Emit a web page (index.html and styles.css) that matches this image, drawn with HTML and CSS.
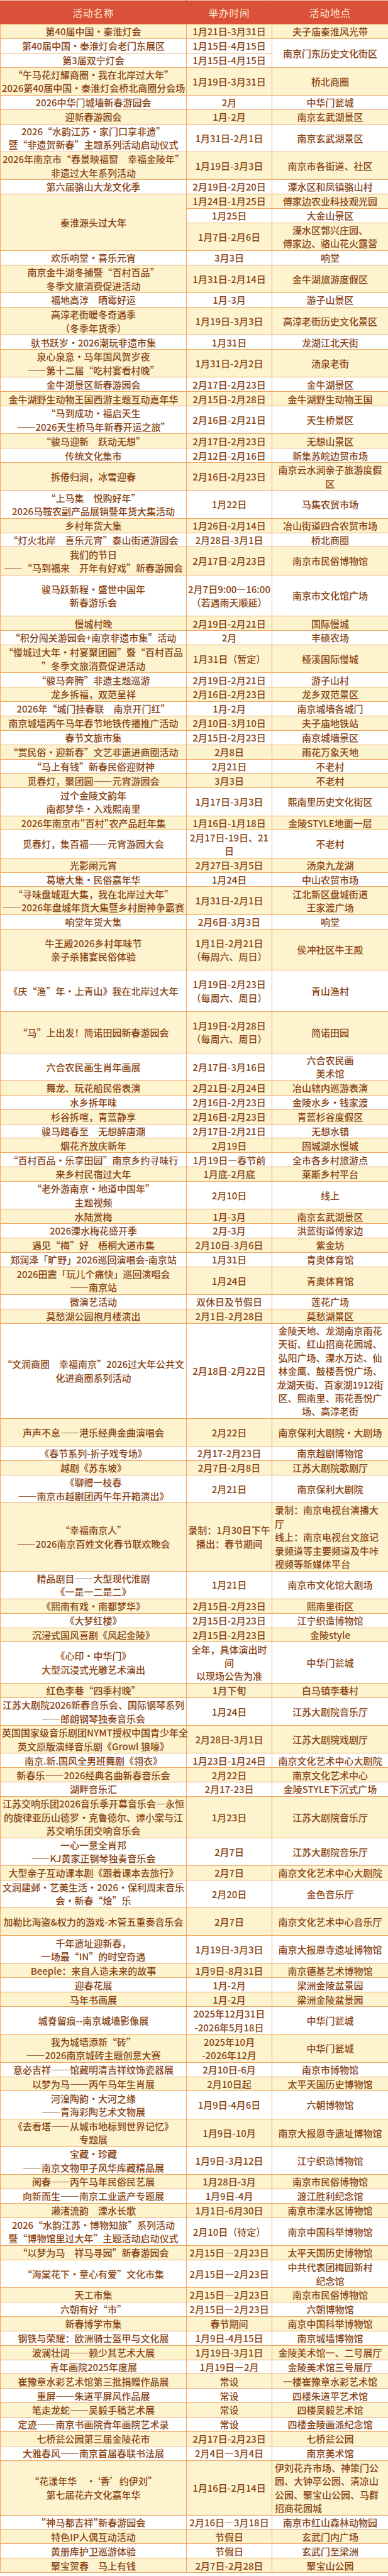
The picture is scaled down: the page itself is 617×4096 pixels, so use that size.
FILE: index.html
```html
<!DOCTYPE html>
<html lang="zh-CN">
<head>
<meta charset="utf-8">
<title>2026南京新春文旅活动</title>
<link rel="stylesheet" href="styles.css">
</head>
<body>
<table class="events">
<colgroup><col class="c-name"><col class="c-time"><col class="c-place"></colgroup>
<thead>
<tr><th>活动名称</th><th>举办时间</th><th>活动地点</th></tr>
</thead>
<tbody>
<tr class="y"><td>第40届中国·秦淮灯会</td><td>1月21日-3月31日</td><td>夫子庙秦淮风光带</td></tr>
<tr><td>第40届中国·秦淮灯会老门东展区</td><td>1月15日-4月15日</td><td rowspan="2">南京门东历史文化街区</td></tr>
<tr><td>第3届双宁灯会</td><td>1月15日-4月15日</td></tr>
<tr class="y"><td>“午马花灯耀商圈·我在北岸过大年”<br>2026第40届中国·秦淮灯会桥北商圈分会场</td><td>1月19日-3月31日</td><td>桥北商圈</td></tr>
<tr><td>2026中华门城墙新春游园会</td><td>2月</td><td>中华门瓮城</td></tr>
<tr class="y"><td>迎新春游园会</td><td>1月-2月</td><td>南京玄武湖景区</td></tr>
<tr><td>2026“水韵江苏·家门口享非遗”<br>暨“非遗贺新春”主题系列活动启动仪式</td><td>1月31日-2月1日</td><td>南京玄武湖景区</td></tr>
<tr class="y"><td>2026年南京市“春景映福窗　幸福金陵年”<br>非遗过大年系列活动</td><td>1月19日-3月3日</td><td>南京市各街道、社区</td></tr>
<tr><td>第六届骆山大龙文化季</td><td>2月19日-2月20日</td><td>溧水区和凤镇骆山村</td></tr>
<tr class="y"><td rowspan="3">秦淮源头过大年</td><td>1月24日-1月25日</td><td>傅家边农业科技观光园</td></tr>
<tr><td>1月25日</td><td>大金山景区</td></tr>
<tr class="y"><td>1月7日-2月6日</td><td>溧水区郭兴庄园、<br>傅家边、骆山花火露营</td></tr>
<tr><td>欢乐响堂·喜乐元宵</td><td>3月3日</td><td>响堂</td></tr>
<tr class="y"><td>南京金牛湖冬捕暨“百村百品”<br>冬季文旅消费促进活动</td><td>1月31日-2月14日</td><td>金牛湖旅游度假区</td></tr>
<tr><td>福地高淳　晒霉好运</td><td>1月-3月</td><td>游子山景区</td></tr>
<tr class="y"><td>高淳老街暖冬奇遇季<br>（冬季年货季）</td><td>1月19日-3月3日</td><td>高淳老街历史文化景区</td></tr>
<tr><td>驮书跃岁·2026潮玩非遗市集</td><td>1月31日</td><td>龙湖江北天街</td></tr>
<tr class="y"><td>泉心泉意·马年国风贺岁夜<br>——第十二届“吃村宴看村晚”</td><td>1月31日-2月2日</td><td>汤泉老街</td></tr>
<tr><td>金牛湖景区新春游园会</td><td>2月17日-2月23日</td><td>金牛湖景区</td></tr>
<tr class="y"><td>金牛湖野生动物王国西游主题互动嘉年华</td><td>2月15日-2月28日</td><td>金牛湖野生动物王国</td></tr>
<tr><td>“马到成功·福启天生<br>——2026天生桥马年新春开运之旅”</td><td>2月16日-2月21日</td><td>天生桥景区</td></tr>
<tr class="y"><td>“骏马迎新　跃动无想”</td><td>2月17日-2月23日</td><td>无想山景区</td></tr>
<tr><td>传统文化集市</td><td>2月12日-2月16日</td><td>新集苏皖边贸市场</td></tr>
<tr class="y"><td>拆倦归涧，冰雪迎春</td><td>2月16日-2月23日</td><td>南京云水涧亲子旅游度假<br>区</td></tr>
<tr><td>“上马集　悦购好年”<br>2026马鞍农副产品展销暨年货大集活动</td><td>1月22日</td><td>马集农贸市场</td></tr>
<tr class="y"><td>乡村年货大集</td><td>1月26日-2月14日</td><td>冶山街道四合农贸市场</td></tr>
<tr><td>“灯火北岸　喜乐元宵”泰山街道游园会</td><td>2月28日-3月1日</td><td>桥北商圈</td></tr>
<tr class="y"><td>我们的节日<br>——“马到福来　开年有好戏”新春游园会</td><td>2月17日-2月23日</td><td>南京市民俗博物馆</td></tr>
<tr class="h3"><td>骏马跃新程·盛世中国年<br>新春游乐会</td><td>2月7日9:00—16:00<br>（若遇雨天顺延）</td><td>南京市文化馆广场</td></tr>
<tr class="y"><td>慢城村晚</td><td>2月19日-2月21日</td><td>国际慢城</td></tr>
<tr><td>“积分闯关游园会+南京非遗市集”活动</td><td>2月</td><td>丰硕农场</td></tr>
<tr class="y"><td>“慢城过大年·村宴聚团圆”暨“百村百品<br>”冬季文旅消费促进活动</td><td>1月31日（暂定）</td><td>桠溪国际慢城</td></tr>
<tr><td>“骏马奔腾”非遗主题巡游</td><td>2月19日-2月21日</td><td>游子山村</td></tr>
<tr class="y"><td>龙乡拆福，双范呈祥</td><td>2月16日-2月23日</td><td>龙乡双范景区</td></tr>
<tr><td>2026年“城门挂春联　南京开门红”</td><td>1月-2月</td><td>南京城墙各城门</td></tr>
<tr class="y"><td>南京城墙丙午马年春节地铁传播推广活动</td><td>2月10日-3月10日</td><td>夫子庙地铁站</td></tr>
<tr><td>春节文旅市集</td><td>2月15日-2月23日</td><td>南京城墙景区</td></tr>
<tr class="y"><td>“赏民俗·迎新春”文艺非遗进商圈活动</td><td>2月8日</td><td>雨花万象天地</td></tr>
<tr><td>“马上有钱”新春民俗迎财神</td><td>2月21日</td><td>不老村</td></tr>
<tr class="y"><td>觅春灯，聚团圆——元宵游园会</td><td>3月3日</td><td>不老村</td></tr>
<tr><td>过个金陵文韵年<br>南都梦华·入戏熙南里</td><td>1月17日-3月3日</td><td>熙南里历史文化街区</td></tr>
<tr class="y"><td>2026年南京市"百村"农产品赶年集</td><td>1月16日-1月18日</td><td>金陵STYLE地面一层</td></tr>
<tr><td>觅春灯，集百福——元宵游园大会</td><td>2月17日-19日、21<br>日</td><td>不老村</td></tr>
<tr class="y"><td>光影闹元宵</td><td>2月27日-3月5日</td><td>汤泉九龙湖</td></tr>
<tr><td>葛塘大集·民俗嘉年华</td><td>1月24日</td><td>中山农贸市场</td></tr>
<tr class="y"><td>“寻味盘城逛大集，我在北岸过大年”<br>——2026年盘城年货大集暨乡村厨神争霸赛</td><td>1月31日-2月1日</td><td>江北新区盘城街道<br>王家渡广场</td></tr>
<tr><td>响堂年货大集</td><td>2月6日-3月3日</td><td>响堂</td></tr>
<tr class="y h3"><td>牛王殿2026乡村年味节<br>亲子杀猪宴民俗体验</td><td>1月1日-2月21日<br>（每周六、周日）</td><td>侯冲社区牛王殿</td></tr>
<tr class="h3"><td>《庆“渔”年·上青山》我在北岸过大年</td><td>1月19日-2月23日<br>（每周六、周日）</td><td>青山渔村</td></tr>
<tr class="y h3"><td>“马”上出发！简诺田园新春游园会</td><td>1月19日-2月28日<br>（每周六、周日）</td><td>简诺田园</td></tr>
<tr><td>六合农民画生肖年画展</td><td>2月17日-3月16日</td><td>六合农民画<br>美术馆</td></tr>
<tr class="y"><td>舞龙、玩花船民俗表演</td><td>2月21日-2月24日</td><td>冶山辖内巡游表演</td></tr>
<tr><td>水乡拆年味</td><td>2月16日-2月23日</td><td>金陵水乡·钱家渡</td></tr>
<tr class="y"><td>杉谷拆喧，青蓝静享</td><td>2月16日-2月23日</td><td>青蓝杉谷度假区</td></tr>
<tr><td>骏马踏春至　无想醉唐潮</td><td>2月17日-2月21日</td><td>无想水镇</td></tr>
<tr class="y"><td>烟花齐放庆新年</td><td>2月19日</td><td>固城湖水慢城</td></tr>
<tr><td>“百村百品·乐享田园”南京乡约寻味行</td><td>1月19日—春节前</td><td>全市各乡村旅游点</td></tr>
<tr class="y"><td>来乡村民宿过大年</td><td>1月底-2月底</td><td>莱斯乡村平台</td></tr>
<tr><td>“老外游南京·地道中国年”<br>主题视频</td><td>2月10日</td><td>线上</td></tr>
<tr class="y"><td>水陆赏梅</td><td>1月-3月</td><td>南京玄武湖景区</td></tr>
<tr><td>2026溧水梅花盛开季</td><td>2月-3月</td><td>洪蓝街道傅家边</td></tr>
<tr class="y"><td>遇见“梅”好　梧桐大道市集</td><td>2月10日-3月6日</td><td>紫金坊</td></tr>
<tr><td>郑润泽「旷野」2026巡回演唱会-南京站</td><td>1月31日</td><td>青奥体育馆</td></tr>
<tr class="y"><td>2026田震「玩儿个痛快」巡回演唱会<br>——南京站</td><td>1月24日</td><td>青奥体育馆</td></tr>
<tr><td>微演艺活动</td><td>双休日及节假日</td><td>莲花广场</td></tr>
<tr class="y"><td>莫愁湖公园抱月楼演出</td><td>2月1日-2月28日</td><td>莫愁湖景区</td></tr>
<tr><td>“文润商圈　幸福南京”2026过大年公共文<br>化进商圈系列活动</td><td>2月18日-2月22日</td><td>金陵天地、龙湖南京雨花<br>天街、红山招商花园城、<br>弘阳广场、溧水万达、仙<br>林金鹰、鼓楼吾悦广场、<br>龙湖天街、百家湖1912街<br>区、熙南里、雨花吾悦广<br>场、高淳老街</td></tr>
<tr class="y h2"><td>声声不息——港乐经典金曲演唱会</td><td>2月22日</td><td>南京保利大剧院·大剧场</td></tr>
<tr><td>《春节系列-折子戏专场》</td><td>2月17-2月23日</td><td>南京越剧博物馆</td></tr>
<tr class="y"><td>越剧《苏东坡》</td><td>2月7日-2月8日</td><td>江苏大剧院歌剧厅</td></tr>
<tr><td>《聊赠一枝春<br>——南京市越剧团丙午年开箱演出》</td><td>2月21日</td><td>南京保利大剧院</td></tr>
<tr class="y"><td>“幸福南京人”<br>——2026南京百姓文化春节联欢晚会</td><td>录制：1月30日下午<br>播出：春节期间</td><td class="left">录制：南京电视台演播大<br>厅<br>线上：南京电视台文旅记<br>录频道等主要频道及牛咔<br>视频等新媒体平台</td></tr>
<tr><td>精品剧目——大型现代淮剧<br>《一是一二是二》</td><td>1月21日</td><td>南京市文化馆大剧场</td></tr>
<tr class="y"><td>《熙南有戏·南都梦华》</td><td>2月15日-2月23日</td><td>熙南里街区</td></tr>
<tr><td>《大梦红楼》</td><td>2月15日-2月23日</td><td>江宁织造博物馆</td></tr>
<tr class="y"><td>沉浸式国风喜剧《风起金陵》</td><td>2月15日-2月23日</td><td>金陵style</td></tr>
<tr><td>《心印·中华门》<br>大型沉浸式光雕艺术演出</td><td>全年，具体演出时<br>间<br>以现场公告为准</td><td>中华门瓮城</td></tr>
<tr class="y"><td>红色李巷“四季村晚”</td><td>1月下旬</td><td>白马镇李巷村</td></tr>
<tr><td>江苏大剧院2026新春音乐会、国际钢琴系列<br>——郎朗钢琴独奏音乐会</td><td>1月24日</td><td>江苏大剧院音乐厅</td></tr>
<tr class="y"><td>英国国家级音乐剧团NYMT授权中国青少年全<br>英文原版演绎音乐剧《Growl 狼嚎》</td><td>2月28日-3月1日</td><td>江苏大剧院戏剧厅</td></tr>
<tr><td>南京.新.国风全男班舞剧《翎衣》</td><td>1月23日-1月24日</td><td>南京文化艺术中心大剧院</td></tr>
<tr class="y"><td>新春乐——2026经典名曲新春音乐会</td><td>2月22日</td><td>南京文化艺术中心</td></tr>
<tr><td>湖畔音乐汇</td><td>2月17-23日</td><td>金陵STYLE下沉式广场</td></tr>
<tr class="y"><td>江苏交响乐团2026音乐季开幕音乐会—永恒<br>的旋律亚历山德罗·克鲁德尔、谭小棠与江<br>苏交响乐团交响音乐会</td><td>1月23日</td><td>江苏大剧院音乐厅</td></tr>
<tr><td>一心一意全肖邦<br>——KJ黄家正钢琴独奏音乐会</td><td>2月7日</td><td>江苏大剧院音乐厅</td></tr>
<tr class="y"><td>大型亲子互动课本剧《跟着课本去旅行》</td><td>2月7日</td><td>南京文化艺术中心大剧院</td></tr>
<tr><td>文润建邺·艺美生活·2026·保利周末音乐<br>会·新春“烩”乐</td><td>2月20日</td><td>金色音乐厅</td></tr>
<tr class="y h2"><td>加勒比海盗&amp;权力的游戏-木管五重奏音乐会</td><td>2月7日</td><td>南京文化艺术中心音乐厅</td></tr>
<tr><td>千年遗址迎新春，<br>一场最“IN”的时空奇遇</td><td>1月19日-3月3日</td><td>南京大报恩寺遗址博物馆</td></tr>
<tr class="y"><td>Beeple：来自人造未来的故事</td><td>1月9日-8月31日</td><td>南京德基艺术博物馆</td></tr>
<tr><td>迎春花展</td><td>1月-2月</td><td>梁洲金陵盆景园</td></tr>
<tr class="y"><td>马年书画展</td><td>1月-2月</td><td>梁洲金陵盆景园</td></tr>
<tr><td>城脊留痕--南京城墙影像展</td><td>2025年12月31日<br>-2026年5月18日</td><td>中华门瓮城</td></tr>
<tr class="y"><td>我为城墙添新“砖”<br>——2026南京城砖主题创意大赛</td><td>2025年10月<br>-2026年12月</td><td>中华门瓮城</td></tr>
<tr><td>意必吉祥——馆藏明清吉祥纹饰瓷器展</td><td>2月10日-6月</td><td>南京市博物馆</td></tr>
<tr class="y"><td>以梦为马——丙午马年生肖展</td><td>2月10日起</td><td>太平天国历史博物馆</td></tr>
<tr><td>河湟陶韵·大河之缘<br>——青海彩陶艺术文物展</td><td>1月9日-4月6日</td><td>六朝博物馆</td></tr>
<tr class="y"><td>《去看塔——从城市地标到世界记忆》<br>专题展</td><td>1月9日-10月</td><td>南京大报恩寺遗址博物馆</td></tr>
<tr><td>宝藏·珍藏<br>——南京文物甲子风华库藏精品展</td><td>1月9日-3月12日</td><td>江宁织造博物馆</td></tr>
<tr class="y"><td>阅春——丙午马年民俗民艺展</td><td>1月28日-3月</td><td>南京市民俗博物馆</td></tr>
<tr><td>向新而生——南京工业遗产专题展</td><td>1月9日-4月</td><td>渡江胜利纪念馆</td></tr>
<tr class="y"><td>濑渚流韵　溧水长歌</td><td>1月1日-6月30日</td><td>南京市溧水区博物馆</td></tr>
<tr><td>2026“水韵江苏•博物知旅”系列活动<br>暨“博物馆里过大年”主题活动启动仪式</td><td>2月10日（待定）</td><td>南京中国科举博物馆</td></tr>
<tr class="y"><td>“以梦为马　祥马寻园”新春游园会</td><td>2月15日—2月23日</td><td>太平天国历史博物馆</td></tr>
<tr><td>“海棠花下·童心有爱”文化市集</td><td>2月15日—2月23日</td><td>中共代表团梅园新村<br>纪念馆</td></tr>
<tr class="y"><td>天工市集</td><td>2月15日—2月23日</td><td>南京市民俗博物馆</td></tr>
<tr><td>六朝有好“市”</td><td>2月15日—2月23日</td><td>六朝博物馆</td></tr>
<tr class="y"><td>新春博学市集</td><td>春节期间</td><td>南京中国科举博物馆</td></tr>
<tr><td>钢铁与荣耀：欧洲骑士盔甲与文化展</td><td>1月9日-4月15日</td><td>南京城墙博物馆</td></tr>
<tr class="y"><td>波澜壮阔——赖少其艺术大展</td><td>1月19日-3月1日</td><td>金陵美术馆一、二号展厅</td></tr>
<tr><td>青年画院2025年度展</td><td>1月19日—2月</td><td>金陵美术馆三号展厅</td></tr>
<tr class="y"><td>崔豫章水彩艺术馆第三批捐赠作品展</td><td>常设</td><td>一楼崔豫章水彩艺术馆</td></tr>
<tr><td>重屏——朱道平屏风作品展</td><td>常设</td><td>四楼朱道平艺术馆</td></tr>
<tr class="y"><td>笔走龙蛇——吴毅手稿艺术展</td><td>常设</td><td>四楼吴毅艺术馆</td></tr>
<tr><td>定迹——南京书画院青年画院艺术录</td><td>常设</td><td>四楼金陵画派纪念馆</td></tr>
<tr class="y"><td>七桥瓮公园第三届金陵花市</td><td>2月17日-2月23日</td><td>七桥瓮公园</td></tr>
<tr><td>大雅春风——南京首届春联书法展</td><td>2月4日—3月4日</td><td>南京美术馆</td></tr>
<tr class="y"><td>“花漾年华　·‘香’约伊刘”<br>第七届花卉文化嘉年华</td><td>1月16日-2月14日</td><td class="left">伊刘花卉市场、神策门公<br>园、大钟亭公园、清凉山<br>公园、聚宝山公园、马群<br>招商花园城</td></tr>
<tr><td>"神马都吉祥"新春游园会</td><td>2月16日—3月18日</td><td>南京市红山森林动物园</td></tr>
<tr class="y"><td>特色IP人偶互动活动</td><td>节假日</td><td>玄武门内广场</td></tr>
<tr><td>黄册库护卫巡游体验</td><td>节假日</td><td>玄武门至梁洲</td></tr>
<tr class="y"><td>聚宝贺春　马上有钱</td><td>2月7日-2月28日</td><td>聚宝山公园</td></tr>
</tbody>
</table>
</body>
</html>
```

FILE: styles.css
```css
* { box-sizing: border-box; }
html, body { margin: 0; padding: 0; background: #ffffff; }
body {
  width: 617px;
  font-family: "Noto Sans CJK SC", "Noto Sans", "Liberation Sans", sans-serif;
}
.events {
  width: 617px;
  border-collapse: collapse;
  table-layout: fixed;
}
.events col.c-name { width: 296px; }
.events col.c-time { width: 136px; }
.events col.c-place { width: 185px; }

.events th {
  height: 38px;
  padding: 0;
  background: #db5039;
  color: #fdefd2;
  font-size: 15.5px;
  font-weight: 400;
  letter-spacing: 1px;
  text-align: center;
  vertical-align: middle;
  border: 1px solid #db5039;
  border-top-color: #f4cdb8;
  border-bottom-color: #f2a35c;
}
.events td {
  padding: 0.25px 2px;
  border: 1px solid #f3a65f;
  background: #ffffff;
  color: #8a4514;
  font-size: 15px;
  font-weight: 500;
  line-height: 21.38px;
  text-align: center;
  vertical-align: middle;
  white-space: nowrap;
}
.events tr.y td { background: #fdf3cf; }
.events td.left { text-align: left; padding-left: 4px; }
.events tr.h2 { height: 44.3px; }
.events tr.h3 { height: 65.7px; }
```
